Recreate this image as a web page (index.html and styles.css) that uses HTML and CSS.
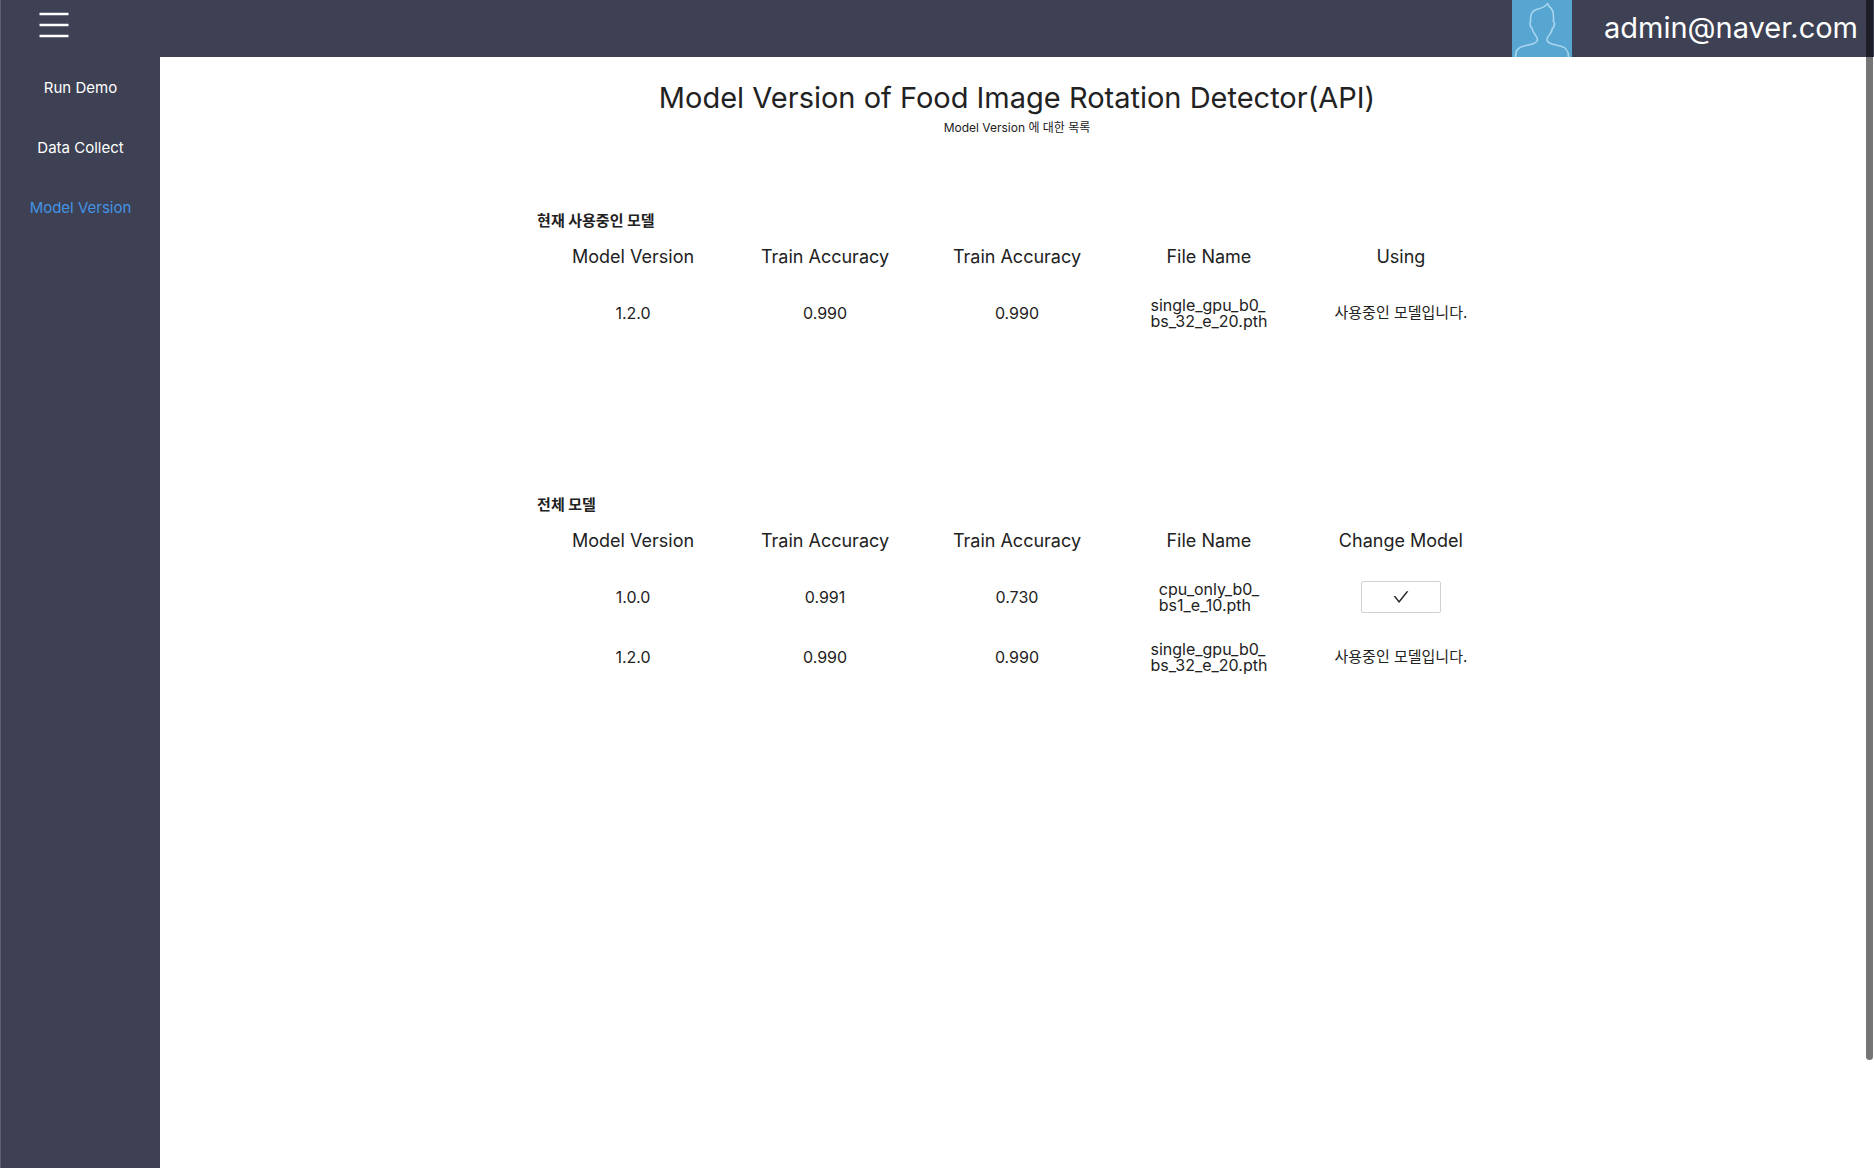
FILE: index.html
```html
<!DOCTYPE html>
<html lang="ko">
<head>
<meta charset="utf-8">
<meta name="viewport" content="width=device-width, initial-scale=1">
<title>Model Version</title>
<link rel="stylesheet" href="styles.css">
</head>
<body>
<header class="topbar">
  <button class="menu-button" type="button" aria-label="Menu">
    <svg width="30" height="26" viewBox="0 0 30 26" fill="none" stroke="currentColor" stroke-width="2.6"><path d="M.5 2h29M.5 13h29M.5 24h29"/></svg>
  </button>
  <div class="account">
    <svg class="avatar" viewBox="0 0 60 57" fill="none" aria-hidden="true">
      <path fill="#57a5d1" d="M0 0h60v57H0z"/>
      <path stroke="#a9d6ef" stroke-width="1.600" stroke-linejoin="round" d="M3.500 57C3.500 50 6 47.500 12 46C19 44.300 25 43.500 25.500 40C25.700 38 24.500 36.500 23 34.500C21 32 20.300 30.500 20 28C18.300 28 17.300 22 18.700 21.500C18 15 19.500 11 24.500 9.500C29 8.300 34 7 35.500 3.500C36.500 4.500 37 5.500 37 6.500C41.500 9 42 15 41.300 21.500C43.500 21.500 42 28 40.500 28C40 31 39 33 37.500 34.800C35.500 37 34.500 38.500 35 40.500C36 44 43 44.600 49 46.200C54.500 47.700 56.500 50.500 56.500 57"/>
    </svg>
    <span class="email">admin@naver.com</span>
  </div>
</header>
<div class="layout">
  <nav class="sidebar">
    <a href="#demo">Run Demo</a>
    <a href="#collect">Data Collect</a>
    <a class="active" href="#version" aria-current="page">Model Version</a>
  </nav>
  <main class="content">
    <h1>Model Version of Food Image Rotation Detector(API)</h1>
    <p class="subtitle">Model Version 에 대한 목록</p>
    <section class="models">
      <h2 id="current">현재 사용중인 모델</h2>
      <table aria-labelledby="current">
        <thead><tr><th>Model Version</th><th>Train Accuracy</th><th>Train Accuracy</th><th>File Name</th><th>Using</th></tr></thead>
        <tbody>
          <tr><td>1.2.0</td><td>0.990</td><td>0.990</td><td><span class="file">single_gpu_b0_<br>bs_32_e_20.pth</span></td><td class="status">사용중인 모델입니다.</td></tr>
        </tbody>
      </table>
    </section>
    <section class="models">
      <h2 id="all">전체 모델</h2>
      <table aria-labelledby="all">
        <thead><tr><th>Model Version</th><th>Train Accuracy</th><th>Train Accuracy</th><th>File Name</th><th>Change Model</th></tr></thead>
        <tbody>
          <tr><td>1.0.0</td><td>0.991</td><td>0.730</td><td><span class="file">cpu_only_b0_<br>bs1_e_10.pth</span></td><td><button class="select" type="button" aria-label="Use model 1.0.0"><svg width="16" height="16" viewBox="64 64 896 896" fill="currentColor"><path d="M912 190h-69.900c-9.800 0-19.100 4.500-25.100 12.200L404.700 724.500 207 474a32 32 0 0 0-25.100-12.200H112c-6.700 0-10.400 7.700-6.300 12.900l273.900 347c12.800 16.200 37.400 16.200 50.300 0l488.400-618.900c4.100-5.100.4-12.800-6.300-12.800z"/></svg></button></td></tr>
          <tr><td>1.2.0</td><td>0.990</td><td>0.990</td><td><span class="file">single_gpu_b0_<br>bs_32_e_20.pth</span></td><td class="status">사용중인 모델입니다.</td></tr>
        </tbody>
      </table>
    </section>
  </main>
</div>
<div class="scroll-thumb"></div>
</body>
</html>
```

FILE: styles.css
```css
* {
  box-sizing: border-box;
}

body {
  margin: 0;
  min-height: 100vh;
  display: flex;
  flex-direction: column;
  background: #fff;
  color: #222;
  font: 16px/20px Inter, "Noto Sans CJK KR", sans-serif;
}

.topbar {
  height: 57px;
  display: flex;
  justify-content: space-between;
  background: #3d4153;
  border-left: 1px solid #5c6072;
  color: #fff;
}

.menu-button {
  align-self: flex-start;
  margin: 12px 0 0 38px;
  padding: 0;
  border: 0;
  background: none;
  color: inherit;
  cursor: pointer;
}

.menu-button svg,
.select svg {
  display: block;
}

.account {
  display: flex;
  align-items: flex-start;
  gap: 32px;
  padding-right: 16px;
}

.avatar {
  width: 60px;
  height: 57px;
}

.email {
  font-size: 29px;
  line-height: 56px;
}

.layout {
  flex: 1;
  display: flex;
}

.sidebar {
  width: 160px;
  flex: none;
  padding-top: 1px;
  background: #3d4153;
  border-left: 1px solid #5c6072;
}

.sidebar a {
  display: block;
  color: #fff;
  font-size: 15px;
  line-height: 60px;
  text-align: center;
  text-decoration: none;
}

.sidebar .active {
  color: #4494e6;
}

.content {
  flex: 1;
  padding-top: 21px;
}

h1 {
  margin: 0;
  font-size: 29px;
  font-weight: 400;
  line-height: 40px;
  text-align: center;
}

.subtitle {
  margin: 0;
  font-size: 12px;
  line-height: 20px;
  text-align: center;
}

.models {
  width: 56%;
  margin: 73px auto 152px;
}

.models + .models {
  margin-top: 0;
}

h2 {
  margin: 0;
  font-size: 15px;
  line-height: 20px;
}

table {
  width: 100%;
  table-layout: fixed;
  border-collapse: collapse;
  text-align: center;
}

th,
td {
  height: 60px;
  padding: 0;
  font-size: 16px;
}

th {
  height: 52px;
  font-size: 18px;
  font-weight: 400;
}

.status {
  font-size: 15px;
}

.file {
  display: inline-block;
  line-height: 16px;
  text-align: left;
  vertical-align: middle;
}

.select {
  width: 80px;
  height: 32px;
  display: flex;
  align-items: center;
  justify-content: center;
  margin: 0 auto;
  padding: 0;
  border: 1px solid #d0d0d0;
  border-radius: 2px;
  background: #fff;
  color: #222;
  cursor: pointer;
}

.scroll-thumb {
  position: fixed;
  top: 0;
  right: 1px;
  width: 7px;
  height: 1060px;
  max-height: 91vh;
  border-radius: 0 0 4px 4px;
  background: rgba(0, 0, 0, 0.54);
}
```
